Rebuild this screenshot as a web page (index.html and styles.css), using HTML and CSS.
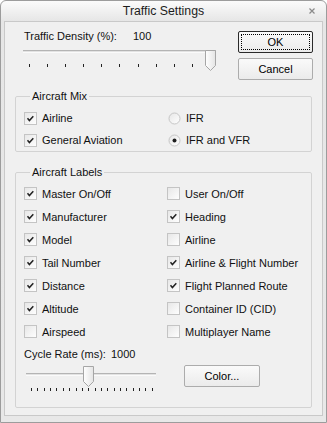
FILE: index.html
```html
<!DOCTYPE html>
<html lang="en">
<head>
    <meta charset="UTF-8">
    <title>Traffic Settings</title>
    <link rel="stylesheet" href="styles.css">
</head>
<body>
    <div class="window">
        <div class="titlebar">
            <span class="title">Traffic Settings</span>
            <svg class="close" width="6" height="6" viewBox="0 0 6 6"><path d="M0.5 0.5 L5.5 5.5 M5.5 0.5 L0.5 5.5" stroke="#8a8a8a" stroke-width="1.2"/></svg>
        </div>
        <div class="client">
            <div class="top">
                <div class="density">
                    <div class="value-row"><span class="density-label">Traffic Density (%):</span><span>100</span></div>
                    <div class="slider slider-density">
                        <div class="track"></div>
                        <svg class="thumb thumb-end" width="11" height="21" viewBox="0 0 11 21"><use href="#thumb"/></svg>
                        <div class="ticks">
                            <i></i><i></i><i></i><i></i><i></i><i></i><i></i><i></i><i></i><i></i><i></i>
                        </div>
                    </div>
                </div>
                <div class="buttons">
                    <button class="btn btn-default"><span class="focus">OK</span></button>
                    <button class="btn">Cancel</button>
                </div>
            </div>

            <fieldset class="group group-mix">
                <legend>Aircraft Mix</legend>
                <div class="options">
                    <label class="opt"><svg class="box"><use href="#checked"/></svg>Airline</label>
                    <label class="opt"><svg class="box"><use href="#radio"/></svg>IFR</label>
                    <label class="opt"><svg class="box"><use href="#checked"/></svg>General Aviation</label>
                    <label class="opt"><svg class="box"><use href="#radio-on"/></svg>IFR and VFR</label>
                </div>
            </fieldset>

            <fieldset class="group group-labels">
                <legend>Aircraft Labels</legend>
                <div class="options">
                    <label class="opt"><svg class="box"><use href="#checked"/></svg>Master On/Off</label>
                    <label class="opt"><svg class="box"><use href="#unchecked"/></svg>User On/Off</label>
                    <label class="opt"><svg class="box"><use href="#checked"/></svg>Manufacturer</label>
                    <label class="opt"><svg class="box"><use href="#checked"/></svg>Heading</label>
                    <label class="opt"><svg class="box"><use href="#checked"/></svg>Model</label>
                    <label class="opt"><svg class="box"><use href="#unchecked"/></svg>Airline</label>
                    <label class="opt"><svg class="box"><use href="#checked"/></svg>Tail Number</label>
                    <label class="opt"><svg class="box"><use href="#checked"/></svg>Airline &amp; Flight Number</label>
                    <label class="opt"><svg class="box"><use href="#checked"/></svg>Distance</label>
                    <label class="opt"><svg class="box"><use href="#checked"/></svg>Flight Planned Route</label>
                    <label class="opt"><svg class="box"><use href="#checked"/></svg>Altitude</label>
                    <label class="opt"><svg class="box"><use href="#unchecked"/></svg>Container ID (CID)</label>
                    <label class="opt"><svg class="box"><use href="#unchecked"/></svg>Airspeed</label>
                    <label class="opt"><svg class="box"><use href="#unchecked"/></svg>Multiplayer Name</label>
                </div>
                <div class="value-row cycle-row"><span class="cycle-label">Cycle Rate (ms):</span><span>1000</span></div>
                <div class="cycle">
                    <div class="slider slider-cycle">
                        <div class="track"></div>
                        <svg class="thumb thumb-mid" width="11" height="21" viewBox="0 0 11 21"><use href="#thumb"/></svg>
                        <div class="ticks">
                            <i></i><i></i><i></i><i></i><i></i><i></i><i></i><i></i><i></i><i></i>
                            <i></i><i></i><i></i><i></i><i></i><i></i><i></i><i></i><i></i><i></i>
                        </div>
                    </div>
                    <button class="btn btn-color">Color...</button>
                </div>
            </fieldset>
        </div>
    </div>

    <!-- shared control drawings -->
    <svg class="defs" width="0" height="0">
        <defs>
            <linearGradient id="boxFill" x1="0" y1="0" x2="1" y2="1">
                <stop offset="0" stop-color="#e6e6e6"/>
                <stop offset="1" stop-color="#ffffff"/>
            </linearGradient>
            <linearGradient id="thumbFill" x1="0" y1="0" x2="1" y2="0">
                <stop offset="0" stop-color="#ffffff"/>
                <stop offset="1" stop-color="#e4e4e4"/>
            </linearGradient>
            <g id="unchecked">
                <rect x="0.5" y="0.5" width="12" height="12" fill="url(#boxFill)" stroke="#c4c4c4"/>
            </g>
            <g id="checked">
                <rect x="0.5" y="0.5" width="12" height="12" fill="url(#boxFill)" stroke="#c4c4c4"/>
                <path d="M3.5 6.3 L5.4 8.5 L9.3 4.2" fill="none" stroke="#222" stroke-width="1.5"/>
            </g>
            <g id="radio">
                <circle cx="6.5" cy="6.5" r="5.5" fill="url(#boxFill)" stroke="#c6c6c6"/>
            </g>
            <g id="radio-on">
                <circle cx="6.5" cy="6.5" r="5.5" fill="url(#boxFill)" stroke="#c6c6c6"/>
                <circle cx="6.5" cy="6.5" r="2" fill="#1e1e1e"/>
            </g>
            <g id="thumb">
                <path d="M0.5 0.5 H10.5 V15.5 L5.5 20.5 L0.5 15.5 Z" fill="url(#thumbFill)" stroke="#a6a6a6"/>
            </g>
        </defs>
    </svg>
</body>
</html>
```

FILE: styles.css
```css
/* Global */
body {
    margin: 0;
    font-family: 'Liberation Sans', Arial, sans-serif;
    font-size: 11px;
    color: #111;
    background: #ffffff;
}

.defs {
    position: absolute;
}

/* Window frame */
.window {
    width: 327px;
    height: 423px;
    box-sizing: border-box;
    display: flex;
    flex-direction: column;
    padding: 0 3px 6px 3px;
    border: 1px solid #9c9c9c;
    border-radius: 6px 6px 0 0;
    background: linear-gradient(#fbfbfb, #e6e6e6 20px, #e8e8e8);
}

.titlebar {
    height: 20px;
    display: flex;
    justify-content: center;
    align-items: center;
    position: relative;
}

.title {
    font-size: 12.3px;
    color: #1c1c1c;
    margin-top: -1px;
}

.close {
    position: absolute;
    right: 8px;
    top: 7px;
}

.client {
    flex: 1;
    border: 1px solid #c9c9c9;
    background: #f0f0f0;
}

/* Top row: density slider + buttons */
.top {
    display: flex;
    justify-content: space-between;
    padding: 7px 9px 0 19px;
}

.value-row {
    display: flex;
    line-height: 14px;
}

.density-label {
    width: 109px;
}

.slider {
    position: relative;
}

.slider-density {
    width: 193px;
    margin: 6px 0 0 -1px;
    height: 25px;
}

.track {
    margin-top: 7px;
    height: 1px;
    background: #e2e2e2;
    border-top: 1px solid #b4b4b4;
    border-bottom: 1px solid #fafafa;
}

.thumb {
    position: absolute;
    top: 0;
}

.thumb-end {
    right: 0;
}

.thumb-mid {
    left: 57px;
}

.ticks {
    display: flex;
    justify-content: space-between;
}

.ticks i {
    width: 1px;
    height: 3px;
    background: #222;
}

.slider-density .ticks {
    margin-top: 11px;
    padding: 0 5px 0 6px;
}

.buttons {
    display: flex;
    flex-direction: column;
    gap: 5px;
    margin-top: 2px;
}

.btn {
    width: 75px;
    height: 22px;
    padding: 0;
    font-family: inherit;
    font-size: 11px;
    color: #000;
    border: 1px solid #acacac;
    border-radius: 2px;
    background: linear-gradient(#fafafa, #ebebeb);
}

.btn-default {
    border-color: #2a2a2a;
    display: flex;
}

.focus {
    flex: 1;
    margin: 2px;
    border: 1px dotted #000;
    display: flex;
    align-items: center;
    justify-content: center;
}

/* Group boxes */
.group {
    margin: 9px 10px 0 10px;
    padding: 4px 0 0 8px;
    border: 1px solid #d3d3d3;
    border-radius: 2px;
    min-width: 0;
}

.group legend {
    margin-left: 6px;
    padding: 0 2px;
    line-height: 14px;
}

.options {
    display: grid;
    grid-template-columns: 144px 1fr;
    grid-auto-rows: 22px;
}

.group-labels {
    margin-top: 13px;
    padding-top: 3px;
    padding-bottom: 14px;
}

.group-labels .options {
    grid-template-columns: 143px 1fr;
    grid-auto-rows: 23px;
}

.opt {
    display: flex;
    align-items: center;
    gap: 5px;
}

.box {
    width: 13px;
    height: 13px;
    flex: none;
}

.cycle-row {
    margin-top: 4px;
}

.cycle-label {
    width: 87px;
}

.cycle {
    display: flex;
    align-items: flex-start;
    gap: 28px;
    margin-top: 5px;
    padding-left: 2px;
}

.slider-cycle {
    width: 130px;
    height: 27px;
}

.slider-cycle .ticks {
    margin-top: 12px;
    padding: 0 3px 0 5px;
}

.btn-color {
    width: 76px;
    margin-top: -1px;
}
```
